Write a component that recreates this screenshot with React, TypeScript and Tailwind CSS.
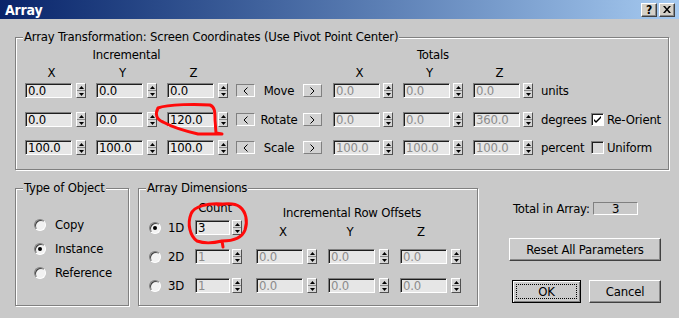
import clsx from "clsx";

const raised =
  "border border-t-white border-l-white border-r-[#404040] border-b-[#404040] shadow-[inset_-1px_-1px_0_#8a8a8a]";
const sunken =
  "border border-t-[#808080] border-l-[#808080] border-r-white border-b-white shadow-[inset_1px_1px_0_#1e1e1e]";

function Spin({ className }: { className?: string }) {
  return (
    <div
      className={clsx(
        "flex h-[15px] w-[10px] flex-col border border-t-white border-l-white border-r-[#505050] border-b-[#505050] bg-[#d6d6d6]",
        className
      )}
    >
      <div className="flex flex-1 items-center justify-center">
        <svg width="5" height="3" viewBox="0 0 5 3">
          <path d="M2.5 0L5 3H0z" fill="#000" />
        </svg>
      </div>
      <div className="h-px bg-[#8a8a8a]" />
      <div className="flex flex-1 items-center justify-center">
        <svg width="5" height="3" viewBox="0 0 5 3">
          <path d="M0 0H5L2.5 3z" fill="#000" />
        </svg>
      </div>
    </div>
  );
}

function Field({ value, disabled, className }: { value: string; disabled?: boolean; className?: string }) {
  return (
    <div
      className={clsx(
        "flex h-[15px] items-center bg-[#e6e6e6] pl-[2px] leading-none",
        sunken,
        disabled ? "text-[#8c8c8c]" : "text-black",
        className
      )}
    >
      {value}
    </div>
  );
}

function Radio({ on }: { on?: boolean }) {
  return (
    <div className="flex h-[12px] w-[12px] shrink-0 items-center justify-center rounded-full border border-t-[#808080] border-l-[#808080] border-r-white border-b-white bg-[#f2f2f2] shadow-[inset_1px_1px_0_#404040]">
      {on && <div className="h-[4px] w-[4px] rounded-full bg-black" />}
    </div>
  );
}

function Check({ on }: { on?: boolean }) {
  return (
    <div
      className={clsx(
        "flex h-[13px] w-[13px] shrink-0 items-center justify-center",
        sunken,
        on ? "bg-white" : "bg-[#d8d8d8]"
      )}
    >
      {on && (
        <svg width="7" height="7" viewBox="0 0 7 7">
          <path d="M0 3l2 2 5-5v2l-5 5-2-2z" fill="#000" />
        </svg>
      )}
    </div>
  );
}

function Group({ title, className, children }: { title: string; className: string; children: React.ReactNode }) {
  return (
    <div className={clsx("relative border border-[#808080] shadow-[1px_1px_0_#fff,inset_1px_1px_0_#fff]", className)}>
      <span className="absolute -top-[8px] left-[7px] bg-[#c9c9c9] px-px leading-[14px]">{title}</span>
      {children}
    </div>
  );
}

const rows = [
  { inc: ["0.0", "0.0", "0.0"], label: "Move", tot: ["0.0", "0.0", "0.0"], unit: "units", check: null, mt: "mt-[3px]" },
  { inc: ["0.0", "0.0", "120.0"], label: "Rotate", tot: ["0.0", "0.0", "360.0"], unit: "degrees", check: { label: "Re-Orient", on: true }, mt: "mt-[14px]" },
  { inc: ["100.0", "100.0", "100.0"], label: "Scale", tot: ["100.0", "100.0", "100.0"], unit: "percent", check: { label: "Uniform", on: false }, mt: "mt-[13px]" },
];

const dims = [
  { name: "1D", count: "3", on: true },
  { name: "2D", count: "1", on: false },
  { name: "3D", count: "1", on: false },
];

export default function App() {
  return (
    <div className="relative flex h-[318px] w-[679px] flex-col overflow-hidden bg-[#c9c9c9] text-[13px] leading-[14px] tracking-[-0.2px] text-black font-['Liberation_Sans_Narrow','Arial_Narrow','DejaVu_Sans_Condensed',sans-serif]">
      {/* title bar */}
      <div className="flex h-[19px] shrink-0 items-center bg-linear-to-r from-[#0a246a] to-[#a6caf0] pl-[5px] pr-[4px]">
        <span className="text-[14px] font-bold text-white">Array</span>
        <div className={clsx("ml-auto flex h-[14px] w-[16px] items-center justify-center bg-[#d4d0c8] text-[12px] font-bold leading-none", raised)}>?</div>
        <div className={clsx("ml-[2px] flex h-[14px] w-[16px] items-center justify-center bg-[#d4d0c8]", raised)}>
          <svg width="8" height="7" viewBox="0 0 8 7">
            <path d="M0 0h2l2 2.5L6 0h2L5 3.5 8 7H6L4 4.5 2 7H0l3-3.5z" fill="#000" />
          </svg>
        </div>
      </div>

      <div className="flex flex-col pl-[15px] pt-[18px]">
        <Group title="Array Transformation: Screen Coordinates (Use Pivot Point Center)" className="h-[133px] w-[654px]">
          <div className="flex flex-col pl-[9px] pt-[10px]">
            <div className="flex h-[14px]">
              <span className="w-[203px] text-center">Incremental</span>
              <span className="ml-[105px] w-[200px] text-center">Totals</span>
            </div>
            <div className="mt-[4px] flex h-[14px]">
              <span className="w-[53px] text-center">X</span>
              <span className="ml-[18px] w-[53px] text-center">Y</span>
              <span className="ml-[18px] w-[53px] text-center">Z</span>
              <span className="ml-[113px] w-[53px] text-center">X</span>
              <span className="ml-[17px] w-[53px] text-center">Y</span>
              <span className="ml-[17px] w-[53px] text-center">Z</span>
            </div>
            {rows.map((r) => (
              <div key={r.label} className={clsx("flex h-[15px] items-center", r.mt)}>
                {r.inc.map((v, i) => (
                  <div key={i} className={clsx("flex items-center", i > 0 && "ml-[10px]")}>
                    <Field value={v} className="w-[47px]" />
                    <Spin className="ml-[4px]" />
                  </div>
                ))}
                <div className="ml-[8px] flex h-[13px] w-[19px] items-center justify-center border border-t-[#808080] border-l-[#808080] border-r-white border-b-white bg-[#d2d2d2]">
                  <svg width="5" height="8" viewBox="0 0 5 8">
                    <path d="M4.5 0.5L1 4l3.5 3.5" stroke="#000" fill="none" />
                  </svg>
                </div>
                <span className="w-[48px] text-center">{r.label}</span>
                <div className="flex h-[13px] w-[19px] items-center justify-center border border-t-white border-l-white border-r-[#808080] border-b-[#808080] bg-[#d2d2d2]">
                  <svg width="5" height="8" viewBox="0 0 5 8">
                    <path d="M0.5 0.5L4 4 0.5 7.5" stroke="#000" fill="none" />
                  </svg>
                </div>
                {r.tot.map((v, i) => (
                  <div key={i} className={clsx("flex items-center", i === 0 ? "ml-[11px]" : "ml-[10px]")}>
                    <Field value={v} disabled className="w-[47px]" />
                    <Spin className="ml-[3px]" />
                  </div>
                ))}
                <span className="ml-[8px] w-[50px]">{r.unit}</span>
                {r.check && (
                  <div className="flex items-center">
                    <Check on={r.check.on} />
                    <span className="ml-[3px]">{r.check.label}</span>
                  </div>
                )}
              </div>
            ))}
          </div>
        </Group>

        <div className="mt-[18px] flex">
          <Group title="Type of Object" className="h-[118px] w-[114px]">
            <div className="flex flex-col pl-[18px] pt-[29px]">
              {["Copy", "Instance", "Reference"].map((t, i) => (
                <div key={t} className={clsx("flex h-[14px] items-center", i > 0 && "mt-[10px]")}>
                  <Radio on={t === "Instance"} />
                  <span className="ml-[9px]">{t}</span>
                </div>
              ))}
            </div>
          </Group>

          <Group title="Array Dimensions" className="ml-[9px] h-[118px] w-[340px]">
            <div className="flex flex-col pl-[10px] pt-[12px]">
              <div className="flex h-[19px]">
                <span className="w-[46px]" />
                <span className="w-[40px] self-start text-center">Count</span>
                <span className="ml-[21px] w-[192px] self-end text-center">Incremental Row Offsets</span>
              </div>
              {dims.map((d, i) => (
                <div key={d.name} className={clsx("flex", i === 0 ? "h-[19px]" : "h-[15px]", i === 1 && "mt-[10px]", i === 2 && "mt-[14px]")}>
                  <div className="flex h-[15px] items-center self-start">
                    <Radio on={d.on} />
                    <span className="ml-[7px] w-[27px]">{d.name}</span>
                    <Field value={d.count} disabled={!d.on} className="w-[35px]" />
                    <Spin className="ml-[2px]" />
                  </div>
                  {i === 0 ? (
                    <div className="ml-[14px] flex self-end">
                      <span className="w-[54px] text-center">X</span>
                      <span className="ml-[18px] w-[44px] text-center">Y</span>
                      <span className="ml-[28px] w-[42px] text-center">Z</span>
                    </div>
                  ) : (
                    <div className="ml-[14px] flex h-[15px] items-center">
                      {[0, 1, 2].map((k) => (
                        <div key={k} className={clsx("flex items-center", k > 0 && "ml-[11px]")}>
                          <Field value="0.0" disabled className="w-[47px]" />
                          <Spin className="ml-[4px]" />
                        </div>
                      ))}
                    </div>
                  )}
                </div>
              ))}
            </div>
          </Group>

          <div className="ml-[31px] flex w-[152px] flex-col">
            <div className="mt-[14px] flex h-[13px] items-center pl-[4px] pr-[23px]">
              <span className="whitespace-nowrap">Total in Array:</span>
              <div className="ml-auto flex h-[13px] w-[45px] items-center justify-center border border-t-[#808080] border-l-[#808080] border-r-white border-b-white leading-none">
                3
              </div>
            </div>
            <div className={clsx("mt-[23px] flex h-[23px] w-[152px] items-center justify-center bg-[#cbcbcb]", raised)}>
              Reset All Parameters
            </div>
            <div className="mt-[19px] flex h-[23px]">
              <div className="ml-[3px] flex h-[23px] w-[69px] items-center justify-center border border-black bg-[#cbcbcb] p-[3px] shadow-[inset_1px_1px_0_#fff,inset_-1px_-1px_0_#808080]">
                <div className="flex h-full w-full items-center justify-center border border-dotted border-black">OK</div>
              </div>
              <div className={clsx("ml-[8px] flex h-[23px] w-[72px] items-center justify-center bg-[#cbcbcb]", raised)}>
                Cancel
              </div>
            </div>
          </div>
        </div>
      </div>

      {/* red hand-drawn annotations */}
      <svg className="pointer-events-none absolute left-0 top-0" width="679" height="318" viewBox="0 0 679 318">
        <g stroke="#ff0a0a" strokeWidth="3" fill="none" strokeLinecap="round" strokeLinejoin="round">
          <path d="M158 108C168 104 198 104 210 105C215 107 215 112 215 120L216 133L222 134L198 134C185 131 172 127 163 122C156 119 155 114 158 108" />
          <path d="M222 204C208 203 194 206 191 214C187 224 190 236 197 241C205 244 214 243 222 241L223 247M222 241C232 241 242 238 245 230C248 221 246 212 240 207C236 204 228 203 218 205" />
        </g>
      </svg>
    </div>
  );
}
